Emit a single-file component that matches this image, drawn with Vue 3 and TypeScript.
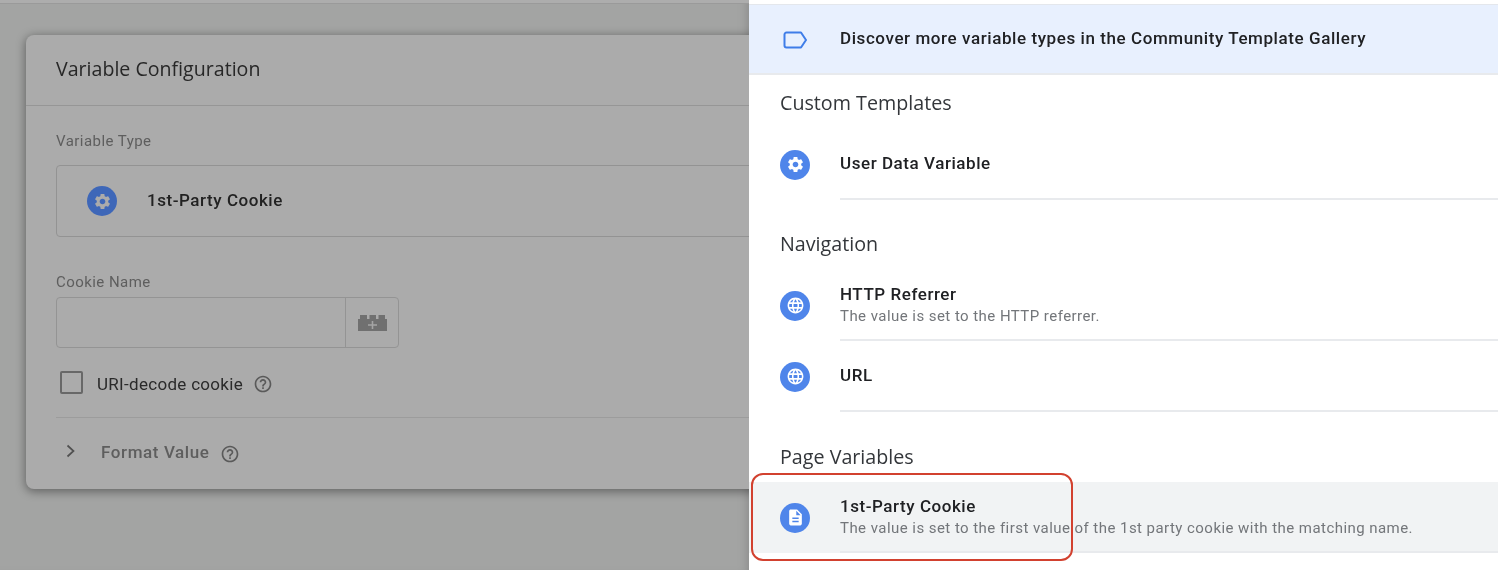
<script setup lang="ts">
interface Row { title: string; sub?: string; icon: string; active?: boolean; clipped?: boolean }
const gear = 'M19.14 12.94c.04-.3.06-.61.06-.94 0-.32-.02-.64-.07-.94l2.03-1.58c.18-.14.23-.41.12-.61l-1.92-3.32c-.12-.22-.37-.29-.59-.22l-2.39.96c-.5-.38-1.03-.7-1.62-.94l-.36-2.54c-.04-.24-.24-.41-.48-.41h-3.84c-.24 0-.43.17-.47.41l-.36 2.54c-.59.24-1.13.57-1.62.94l-2.39-.96c-.22-.08-.47 0-.59.22L2.74 8.87c-.12.21-.08.47.12.61l2.03 1.58c-.05.3-.09.63-.09.94s.02.64.07.94l-2.03 1.58c-.18.14-.23.41-.12.61l1.92 3.32c.12.22.37.29.59.22l2.39-.96c.5.38 1.03.7 1.62.94l.36 2.54c.05.24.24.41.48.41h3.84c.24 0 .44-.17.47-.41l.36-2.54c.59-.24 1.13-.56 1.62-.94l2.39.96c.22.08.47 0 .59-.22l1.92-3.32c.12-.22.07-.47-.12-.61l-2.01-1.58zM12 15.6c-1.98 0-3.6-1.62-3.6-3.6s1.62-3.6 3.6-3.6 3.6 1.62 3.6 3.6-1.62 3.6-3.6 3.6z'
const globe = 'M11.99 2C6.47 2 2 6.48 2 12s4.47 10 9.99 10C17.52 22 22 17.52 22 12S17.52 2 11.99 2zm6.93 6h-2.95c-.32-1.25-.78-2.45-1.38-3.56 1.84.63 3.37 1.91 4.33 3.56zM12 4.04c.83 1.2 1.48 2.53 1.91 3.96h-3.82c.43-1.43 1.08-2.76 1.91-3.96zM4.26 14C4.1 13.36 4 12.69 4 12s.1-1.36.26-2h3.38c-.08.66-.14 1.32-.14 2 0 .68.06 1.34.14 2H4.26zm.82 2h2.95c.32 1.25.78 2.45 1.38 3.56-1.84-.63-3.37-1.9-4.33-3.56zm2.95-8H5.08c.96-1.66 2.49-2.93 4.33-3.56C8.81 5.55 8.35 6.75 8.03 8zM12 19.96c-.83-1.2-1.48-2.53-1.91-3.96h3.82c-.43 1.43-1.08 2.76-1.91 3.96zM14.34 14H9.66c-.09-.66-.16-1.32-.16-2 0-.68.07-1.35.16-2h4.68c.09.65.16 1.32.16 2 0 .68-.07 1.34-.16 2zm.25 5.56c.6-1.11 1.06-2.31 1.38-3.56h2.95c-.96 1.65-2.49 2.93-4.33 3.56zM16.36 14c.08-.66.14-1.32.14-2 0-.68-.06-1.34-.14-2h3.38c.16.64.26 1.31.26 2s-.1 1.36-.26 2h-3.38z'
const doc = 'M14 2H6c-1.1 0-1.99.9-1.99 2L4 20c0 1.1.89 2 1.99 2H18c1.1 0 2-.9 2-2V8l-6-6zm2 16H8v-2h8v2zm0-4H8v-2h8v2zm-3-5V3.5L18.5 9H13z'
const help = 'M11 18h2v-2h-2v2zm1-16C6.48 2 2 6.48 2 12s4.48 10 10 10 10-4.48 10-10S17.52 2 12 2zm0 18c-4.41 0-8-3.59-8-8s3.59-8 8-8 8 3.59 8 8-3.59 8-8 8zm0-14c-2.21 0-4 1.79-4 4h2c0-1.1.9-2 2-2s2 .9 2 2c0 2-3 1.75-3 5h2c0-2.25 3-2.5 3-5 0-2.21-1.79-4-4-4z'

const sections: { name: string; rows: Row[] }[] = [
  { name: 'Custom Templates', rows: [{ title: 'User Data Variable', icon: gear }] },
  { name: 'Navigation', rows: [
    { title: 'HTTP Referrer', sub: 'The value is set to the HTTP referrer.', icon: globe },
    { title: 'URL', icon: globe },
  ] },
  { name: 'Page Variables', rows: [
    { title: '1st-Party Cookie', sub: 'The value is set to the first value of the 1st party cookie with the matching name.', icon: doc, active: true },
    { title: 'Custom JavaScript', icon: doc, clipped: true },
  ] },
]
</script>

<template>
  <div class="page">
    <div class="left">
      <div class="topstrip"></div>
      <section class="card">
        <header class="card-head">Variable Configuration</header>
        <div class="card-body">
          <div class="field-label type-label">Variable Type</div>
          <div class="type-box">
            <span class="badge dim">
              <svg viewBox="0 0 24 24"><path :d="gear" /></svg>
            </span>
            <span class="type-name">1st-Party Cookie</span>
          </div>
          <div class="field-label name-label">Cookie Name</div>
          <div class="input-group">
            <div class="input"></div>
            <div class="input-btn">
              <svg class="brick" viewBox="0 0 29 16">
                <path d="M0 4h2V0h7v4h2.500V0H18v4h2.500V0H27v4h2v12H0z" fill="#707070" />
                <path d="M13.700 6h1.600v3.200h3.700v1.600h-3.700V14h-1.600v-3.200H10V9.200h3.700z" fill="#a5a5a5" />
              </svg>
            </div>
          </div>
          <label class="check-row">
            <span class="check"></span>
            <span class="check-text">URI-decode cookie</span>
            <svg class="help" viewBox="0 0 24 24"><path :d="help" /></svg>
          </label>
          <div class="format-row">
            <svg class="chev" viewBox="0 0 12 16"><path d="M2.500 2.500 8.500 8l-6 5.500" /></svg>
            <span class="format-text">Format Value</span>
            <svg class="help" viewBox="0 0 24 24"><path :d="help" /></svg>
          </div>
        </div>
      </section>
    </div>

    <aside class="panel">
      <div class="banner">
        <svg class="tag" viewBox="0 0 24 18"><path d="M3.500 1.500h14.500l5 7.500-5 7.500H3.500a2 2 0 0 1-2-2V3.500a2 2 0 0 1 2-2z" /></svg>
        <span class="banner-text">Discover more variable types in the Community Template Gallery</span>
      </div>
      <template v-for="(s, i) in sections" :key="s.name">
        <h3 class="heading" :class="{ first: i === 0, low: i === 2 }">{{ s.name }}</h3>
        <div v-for="r in s.rows" :key="r.title" class="row" :class="{ active: r.active, clipped: r.clipped }">
          <span class="badge">
            <svg viewBox="0 0 24 24"><path :d="r.icon" /></svg>
          </span>
          <div class="row-main" :class="{ solo: !r.sub }">
            <div class="row-title">{{ r.title }}</div>
            <div v-if="r.sub" class="row-sub">{{ r.sub }}</div>
          </div>
        </div>
      </template>
      <div class="callout"></div>
    </aside>
  </div>
</template>

<style>
html, body { margin: 0; overflow: hidden; background: #a3a4a3; }
</style>

<style scoped>
.page {
  display: flex;
  width: 1498px;
  height: 570px;
  overflow: hidden;
  font-family: Roboto, "Liberation Sans", sans-serif;
  filter: blur(0.5px);
}
.left {
  width: 749px;
  flex: none;
  height: 570px;
  overflow: hidden;
  background: #a3a4a3;
  box-shadow: inset -8px 0 8px -6px #8c8c8c;
}
.topstrip {
  height: 3px;
  background: #adadad;
  border-bottom: 1px solid #9a9a9a;
  margin-bottom: 31px;
}
.card {
  width: 800px;
  height: 454px;
  margin-left: 26px;
  background: #ababab;
  border-radius: 8px;
  box-shadow: 0 2px 10px 1px rgba(0, 0, 0, 0.38);
}
.card-head {
  height: 71px;
  box-sizing: border-box;
  padding-left: 30px;
  line-height: 68px;
  font-family: "Open Sans", sans-serif;
  font-size: 19.600px;
  color: #272727;
  border-bottom: 1px solid #969696;
}
.card-body { padding: 0 30px; }
.field-label {
  font-size: 15px;
  letter-spacing: 0.45px;
  line-height: 20px;
  color: #5e5e5e;
}
.type-label { padding-top: 25px; }
.type-box {
  display: flex;
  align-items: center;
  height: 72px;
  box-sizing: border-box;
  margin-top: 14px;
  border: 1px solid #939393;
  border-radius: 4px;
  padding-left: 30px;
}
.type-name {
  margin-left: 30px;
  margin-bottom: 2px;
  font-size: 17px;
  font-weight: 500;
  letter-spacing: 0.55px;
  color: #222;
}
.badge {
  display: flex;
  align-items: center;
  justify-content: center;
  flex: none;
  width: 30px;
  height: 30px;
  border-radius: 50%;
  background: #4f85ea;
}
.badge.dim { background: #3e67b8; }
.badge svg { width: 19px; height: 19px; fill: #fff; }
.badge.dim svg { fill: #ababab; }
.name-label { margin-top: 35px; }
.input-group {
  display: flex;
  width: 343px;
  height: 51px;
  box-sizing: border-box;
  margin-top: 5px;
  border: 1px solid #949494;
  border-radius: 4px;
}
.input { flex: 1; border-right: 1px solid #949494; }
.input-btn {
  width: 52px;
  display: flex;
  align-items: center;
  justify-content: center;
}
.brick { width: 29px; height: 16px; margin-top: 1px; }
.check-row {
  display: flex;
  align-items: center;
  height: 36px;
  margin-top: 16px;
  padding-left: 4px;
  padding-bottom: 17px;
  border-bottom: 1px solid #9c9c9c;
}
.check {
  width: 19px;
  height: 19px;
  border: 2px solid #686868;
  border-radius: 2px;
}
.check-text {
  margin-left: 14px;
  margin-top: 3px;
  font-size: 17px;
  letter-spacing: 0.3px;
  color: #2a2a2a;
}
.help { width: 20px; height: 20px; fill: #5a5a5a; margin-left: 10px; margin-top: 4px; }
.format-row {
  display: flex;
  align-items: center;
  height: 32px;
  margin-top: 18px;
}
.chev { width: 12px; height: 16px; margin-left: 9px; margin-bottom: 2px; fill: none; stroke: #505050; stroke-width: 1.700; }
.format-text {
  margin-left: 24px;
  font-size: 17px;
  font-weight: 500;
  letter-spacing: 0.6px;
  color: #5e5e5e;
}
.panel {
  position: relative;
  width: 749px;
  flex: none;
  height: 570px;
  padding-top: 4px;
  box-sizing: border-box;
  overflow: hidden;
  background: #fff;
  color: #202124;
}
.banner {
  display: flex;
  align-items: center;
  height: 71px;
  box-sizing: border-box;
  padding-left: 34px;
  background: #e8f0fe;
  border-top: 1px solid #e4e7ec;
  border-bottom: 2px solid #e8eaed;
}
.tag { width: 24px; height: 18px; margin-top: 2px; fill: none; stroke: #3f7de8; stroke-width: 2; stroke-linejoin: round; }
.banner-text {
  margin-left: 33px;
  margin-bottom: 2px;
  font-size: 17px;
  font-weight: 500;
  letter-spacing: 0.58px;
}
.heading {
  margin: 0;
  height: 70px;
  box-sizing: border-box;
  padding: 32px 0 0 31px;
  line-height: 24px;
  font-family: "Open Sans", sans-serif;
  font-size: 19.700px;
  font-weight: 400;
  color: #33363a;
}
.heading.first { height: 54px; padding-top: 16px; }
.heading.low { padding-top: 33px; }
.row {
  display: flex;
  align-items: center;
  height: 71px;
  padding-left: 31px;
}
.row.active { background: #f1f3f4; }
.row-main {
  align-self: stretch;
  flex: 1;
  margin-left: 30px;
  display: flex;
  flex-direction: column;
  justify-content: center;
  box-sizing: border-box;
  padding-top: 1px;
  border-bottom: 2px solid #e8eaed;
}
.row-main.solo { padding-top: 0; padding-bottom: 1px; }
.row.clipped .row-main { justify-content: flex-start; padding-top: 13px; }
.row-title {
  font-size: 17px;
  font-weight: 500;
  letter-spacing: 0.55px;
  line-height: 22px;
}
.row-sub {
  font-size: 15px;
  letter-spacing: 0.45px;
  line-height: 22px;
  color: #73767a;
}
.callout {
  position: absolute;
  left: 2px;
  top: 473px;
  width: 322px;
  height: 88px;
  box-sizing: border-box;
  border: 2px solid #d2412f;
  border-radius: 12px;
}
</style>
